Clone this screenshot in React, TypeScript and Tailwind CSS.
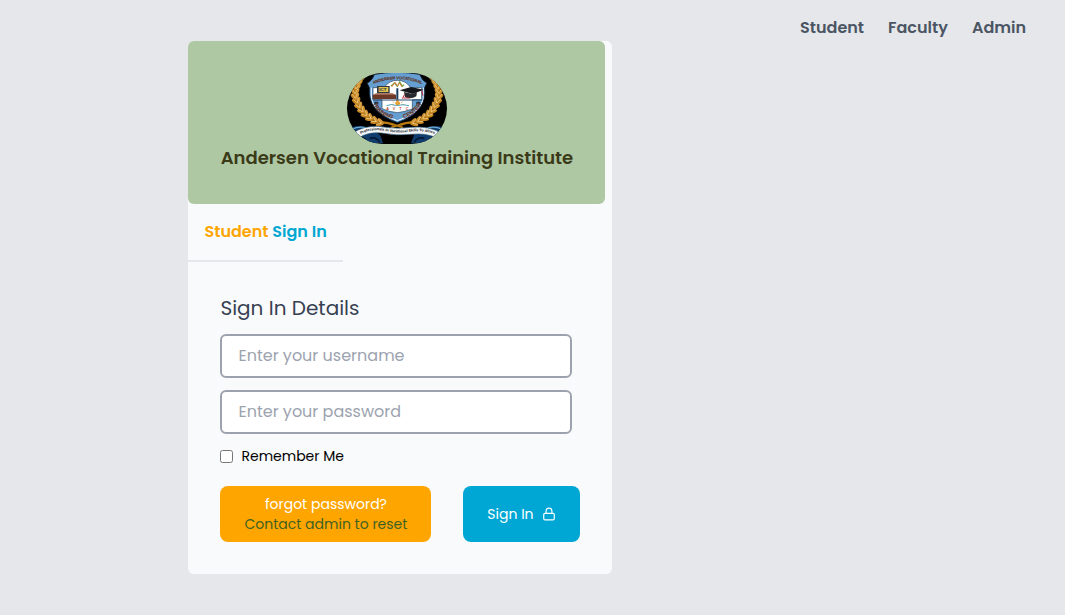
import React from "react";

const leaves = [
  [40, 17, 108], [32, 31, 105], [27, 45, 100], [24, 59, 92], [25, 73, 82],
  [30, 87, 72], [37, 101, 63], [46, 114, 54], [57, 126, 45], [70, 136, 36],
  [85, 144, 27], [101, 150, 18],
];

function Wreath() {
  return (
    <g>
      <path d="M40 18C14 48 20 100 60 130Q76 143 104 151" fill="none" stroke="#a86f1c" strokeWidth="11" />
      <path d="M98 150Q116 145 140 156" fill="none" stroke="#b97a13" strokeWidth="7" />
      {leaves.map(([x, y, a]) => (
        <g key={y} transform={`translate(${x} ${y}) rotate(${a})`}>
          <ellipse cx="-4" cy="-4" rx="12" ry="4.5" transform="rotate(30)" fill="#cf9230" />
          <ellipse cx="-4" cy="4" rx="12" ry="4.5" transform="rotate(-30)" fill="#c48420" />
          <path d="M-11 -8L3 0L-11 8" fill="none" stroke="#ecc477" strokeWidth="2.6" />
        </g>
      ))}
    </g>
  );
}

function Emblem() {
  return (
    <svg viewBox="0 0 300 213" preserveAspectRatio="none" className="h-[71px] w-[100px] rounded-full bg-black font-['Liberation_Sans',sans-serif]" role="img" aria-label="Andersen Vocational Training Institute">
      <defs>
        <path id="arcTop" d="M68 38Q150 -1 236 38" />
        <path id="arcLeft" d="M76 84Q88 128 145 139" />
        <path id="arcRight" d="M160 138Q212 128 226 84" />
        <path id="ribbonLine" d="M34 187Q65 168 103 172Q150 182 190 176Q235 171 270 186" />
      </defs>
      <Wreath />
      <g transform="translate(300 0) scale(-1 1)"><Wreath /></g>
      <path d="M130 151L168 164M170 151L132 164" stroke="#b97a13" strokeWidth="6" />
      <path d="M60 30Q75 24 82 4Q150 -8 218 4Q226 24 240 30L233 44Q242 117 151 149Q60 117 67 44Z" fill="#659fd2" stroke="#141e2c" strokeWidth="3" />
      <path d="M73 44V66Q72 115 151 143Q230 115 229 66V44" fill="none" stroke="#edf6ff" strokeWidth="3" />
      <path d="M78 44H111Q126 22 151 22Q177 22 191 44H224V80H196V108Q172 117 151 119Q126 117 105 107V80H78Z" fill="#fff" stroke="#27415b" strokeWidth="2" />
      <path d="M132 39L143 30L151 40L158 27L166 39L171 35" fill="none" stroke="#71a744" strokeWidth="4" />
      <path d="M134 42L144 28L151 39L158 30L165 42" fill="none" stroke="#e47737" strokeWidth="3" />
      <path d="M151 46V83" stroke="#183d63" strokeWidth="6" />
      <path d="M77 65H147V78H77Z" fill="#6c3827" />
      <path d="M90 39H128V61H90Z" fill="#333540" />
      <path d="M95 42H124V57H95Z" fill="#dfc34c" />
      <text x="97" y="55" fontSize="13" fontWeight="700" fill="#182349">ICT</text>
      <path d="M87 61H137L147 66H77Z" fill="#9e654d" />
      <path d="M158 52L192 42L230 50L197 63Z" fill="#15171c" />
      <path d="M171 57L174 72Q191 80 208 70L210 57L197 63Z" fill="#282a30" />
      <path d="M224 52L228 68M173 64L166 77M169 75L188 75" stroke="#b62c3c" strokeWidth="3" />
      <path d="M78 81H226" stroke="#264b70" strokeWidth="3" />
      <circle cx="152" cy="91" r="7" fill="#e7a132" />
      <path d="M137 85L142 90M152 79V85M167 85L162 90M132 95L141 95M163 95L172 95" stroke="#e7a132" strokeWidth="2" />
      <path d="M118 98Q133 91 149 98Q168 92 186 98" fill="none" stroke="#52a4ba" strokeWidth="3" />
      <text x="118" y="111" fontSize="11" fontWeight="700" textLength="66" fill="#c43b32">AVTC</text>
      <path d="M82 86H94V94H82ZM208 86H220V94H208Z" fill="#183653" />
      <g fill="#8b3e22" stroke="#2d2925" strokeWidth="0.5" fontWeight="700" textAnchor="middle">
        <text fontSize="12"><textPath href="#arcTop" startOffset="50%">ANDERSEN VOCATIONAL</textPath></text>
        <text fontSize="16"><textPath href="#arcLeft" startOffset="50%">TRAINING</textPath></text>
        <text fontSize="17"><textPath href="#arcRight" startOffset="50%">CENTER</textPath></text>
      </g>
      <path d="M12 163Q43 153 68 166L100 187L108 211H45L57 197L20 181ZM288 163Q258 154 232 167L202 184L192 211H260L246 198L280 183Z" fill="#103d6d" />
      <path d="M14 169Q38 158 58 165M286 169Q262 158 242 165" fill="none" stroke="#6eabcf" strokeWidth="4" />
      <path d="M68 196Q88 190 98 208M232 196Q212 190 202 208" fill="none" stroke="#071b36" strokeWidth="5" />
      <path d="M18 180Q49 158 94 160Q148 169 190 163Q247 158 282 180L269 195Q237 179 194 184Q149 189 103 180Q61 176 34 196Z" fill="#f5f8fb" stroke="#315776" strokeWidth="2" />
      <text fontSize="11" fontWeight="700" fill="#111" textAnchor="middle"><textPath href="#ribbonLine" startOffset="50%">Professionals In Vocational Skills To Africa</textPath></text>
    </svg>
  );
}

function LockIcon() {
  return (
    <svg className="ml-2 size-3.5" viewBox="0 0 24 24" fill="none" stroke="currentColor" strokeWidth="2" strokeLinecap="round" strokeLinejoin="round" aria-hidden="true">
      <rect x="3" y="11" width="18" height="11" rx="2" ry="2" />
      <path d="M7 11V7a5 5 0 0 1 10 0v4" />
    </svg>
  );
}

export default function App() {
  return (
    <div className="h-[615px] overflow-hidden bg-[#e5e7eb] font-[Poppins,Inter,sans-serif]">
      <nav className="flex h-[41px] justify-end gap-6 pt-4 pr-[39px] text-base font-semibold text-[#4b5563]">
        <a href="#student" className="w-16 whitespace-nowrap">Student</a>
        <a href="#faculty" className="w-[60px] whitespace-nowrap">Faculty</a>
        <a href="#admin" className="w-[54px] whitespace-nowrap">Admin</a>
      </nav>
      <main className="ml-[188.45px] h-[533px] w-[424px] rounded-md bg-[#f9fafc]">
        <header className="flex h-[163px] w-[417px] flex-col items-center rounded-md bg-[#aec8a4] py-8">
          <Emblem />
          <h1 className="text-lg leading-7 font-semibold whitespace-nowrap text-[#3b3a18]">Andersen Vocational Training Institute</h1>
        </header>
        <h2 className="h-[58px] w-[155px] border-b-2 border-[#e5e7eb] px-4 pt-4 text-base font-semibold whitespace-nowrap text-[#00a7d1]">
          <span className="text-[#ffa500]">Student</span> Sign In
        </h2>
        <form className="p-8" onSubmit={(e) => e.preventDefault()}>
          <h3 className="text-xl leading-7 text-[#374151]">Sign In Details</h3>
          <input aria-label="Username" placeholder="Enter your username" className="mt-3 block h-11 w-[352px] rounded-md border-2 border-[#9ca3af] bg-white px-4 pb-0.5 text-base placeholder:text-[#9ca3af]" />
          <input type="password" aria-label="Password" placeholder="Enter your password" className="mt-3 block h-11 w-[352px] rounded-md border-2 border-[#9ca3af] bg-white px-4 pb-0.5 text-base placeholder:text-[#9ca3af]" />
          <label className="mt-3 flex h-5 items-center gap-2 text-sm text-black">
            <input type="checkbox" className="size-[13px]" />
            <span>Remember Me</span>
          </label>
          <div className="mt-5 flex gap-8">
            <button type="button" className="h-14 w-[211px] rounded-lg bg-[#ffa500] text-sm leading-5 whitespace-nowrap text-white">
              forgot password?<br /><span className="text-[#3f6223]">Contact admin to reset</span>
            </button>
            <button type="submit" className="flex h-14 w-[117px] items-center justify-center rounded-lg bg-[#00a7d4] pr-px text-sm whitespace-nowrap text-white">
              Sign In<LockIcon />
            </button>
          </div>
        </form>
      </main>
    </div>
  );
}
